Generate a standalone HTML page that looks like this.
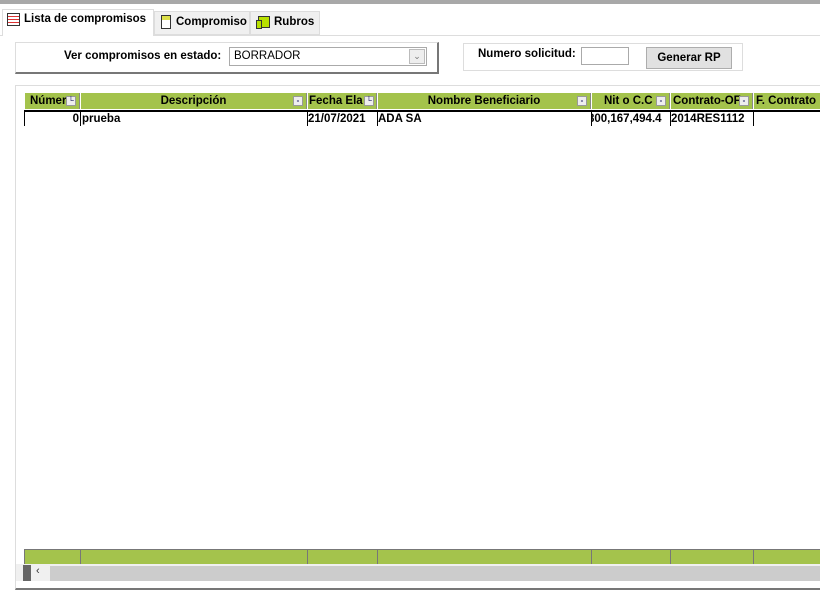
<!DOCTYPE html>
<html><head><style>
*{margin:0;padding:0;box-sizing:border-box}
body{width:820px;height:595px;background:#fff;font-family:"Liberation Sans",Tahoma,sans-serif;font-size:11.5px;position:relative;overflow:hidden}
.a{position:absolute}
.b{font-weight:bold}
.hd{position:absolute;top:93px;height:16px;background:#a4c34c;border-left:1px solid #fff;border-right:1px solid #888;font-weight:bold;line-height:16px;color:#000;white-space:nowrap;overflow:hidden}
.dd{position:absolute;top:3px;width:10px;height:10px;background:#eee;border:1px solid #999;font-size:8px;line-height:7px;text-align:center;color:#226}
.cell{position:absolute;top:110px;height:16px;border-top:2px solid #000;border-left:1px solid #000;font-weight:bold;line-height:14px;white-space:nowrap;overflow:hidden}
.ft{position:absolute;top:549px;height:15px;background:#a4c34c;border-left:1px solid #777;border-top:1px solid #777}
</style></head><body>
<div class="a" style="left:0;top:0;width:820px;height:4px;background:#a8a8a8"></div>
<div class="a" style="left:0;top:35px;width:820px;height:1px;background:#ddd"></div>
<div class="a" style="left:2px;top:9px;width:152px;height:27px;background:#fff;border:1px solid #ddd;border-bottom:none"></div>
<div class="a" style="left:7px;top:13px;width:13px;height:13px;border:1px solid #333;background:repeating-linear-gradient(#fff 0 2px,#d33 2px 3px)"></div>
<div class="a b" style="left:24px;top:13px">Lista de compromisos</div>
<div class="a" style="left:154px;top:11px;width:96px;height:24px;background:#f0f0f0;border:1px solid #ddd"></div>
<div class="a" style="left:161px;top:15px;width:10px;height:14px;border:1px solid #333;background:linear-gradient(#dde04a 0 4px,#fff 4px)"></div>
<div class="a b" style="left:176px;top:16px">Compromiso</div>
<div class="a" style="left:250px;top:11px;width:70px;height:24px;background:#f0f0f0;border:1px solid #ddd"></div>
<div class="a" style="left:258px;top:16px;width:12px;height:12px;border:1px solid #333;background:#b8e000"></div>
<div class="a" style="left:256px;top:20px;width:6px;height:9px;border:1px solid #333;background:#b8e000"></div>
<div class="a b" style="left:274px;top:16px">Rubros</div>
<div class="a" style="left:15px;top:42px;width:424px;height:32px;border:1px solid #ddd;border-right:2px solid #777;border-bottom:2px solid #777"></div>
<div class="a b" style="left:64px;top:50px">Ver compromisos en estado:</div>
<div class="a" style="left:229px;top:47px;width:198px;height:19px;border:1px solid #aaa;padding-left:4px;line-height:17px">BORRADOR</div>
<div class="a" style="left:409px;top:49px;width:16px;height:15px;background:#eee;border:1px solid #bbb;color:#777;font-size:9px;text-align:center;line-height:13px">&#8964;</div>
<div class="a" style="left:463px;top:43px;width:280px;height:28px;border:1px solid #ddd"></div>
<div class="a b" style="left:478px;top:48px">Numero solicitud:</div>
<div class="a" style="left:581px;top:47px;width:48px;height:18px;border:1px solid #aaa"></div>
<div class="a b" style="left:646px;top:47px;width:86px;height:22px;background:#e1e1e1;border:1px solid #adadad;text-align:center;line-height:20px">Generar RP</div>
<div class="a" style="left:15px;top:85px;width:810px;height:505px;border:1px solid #ddd;border-bottom:2px solid #777"></div>
<div class="hd" style="left:24px;width:56px;padding-left:5px">Númer<div class="dd" style="left:41px">&#9492;</div></div>
<div class="hd" style="left:80px;width:227px;text-align:center">Descripción<div class="dd" style="left:212px">-</div></div>
<div class="hd" style="left:307px;width:70px;padding-left:1px">Fecha Ela<div class="dd" style="left:56px">&#9492;</div></div>
<div class="hd" style="left:377px;width:214px;text-align:center">Nombre Beneficiario<div class="dd" style="left:199px">-</div></div>
<div class="hd" style="left:591px;width:79px;padding-left:12px">Nit o C.C<div class="dd" style="left:64px">-</div></div>
<div class="hd" style="left:670px;width:83px;padding-left:2px">Contrato-OF<div class="dd" style="left:68px">-</div></div>
<div class="hd" style="left:753px;width:70px;padding-left:2px">F. Contrato</div>
<div class="cell" style="left:24px;width:56px;text-align:right;padding-right:1px">0</div>
<div class="cell" style="left:80px;width:227px;padding-left:1px">prueba</div>
<div class="cell" style="left:307px;width:70px">21/07/2021</div>
<div class="cell" style="left:377px;width:214px">ADA SA</div>
<div class="cell" style="left:591px;width:79px;text-indent:-4px">800,167,494.4</div>
<div class="cell" style="left:670px;width:83px">2014RES1112</div>
<div class="cell" style="left:753px;width:70px;border-right:none"></div>
<div class="ft" style="left:24px;width:56px"></div>
<div class="ft" style="left:80px;width:227px"></div>
<div class="ft" style="left:307px;width:70px"></div>
<div class="ft" style="left:377px;width:214px"></div>
<div class="ft" style="left:591px;width:79px"></div>
<div class="ft" style="left:670px;width:83px"></div>
<div class="ft" style="left:753px;width:70px"></div>
<div class="a" style="left:16px;top:564px;width:810px;height:17px;background:#f0f0f0"></div>
<div class="a" style="left:23px;top:565px;width:8px;height:16px;background:#666"></div>
<div class="a" style="left:36px;top:565px;font-size:11px;color:#333">&#8249;</div>
<div class="a" style="left:50px;top:566px;width:770px;height:15px;background:#ccc"></div>
</body></html>
